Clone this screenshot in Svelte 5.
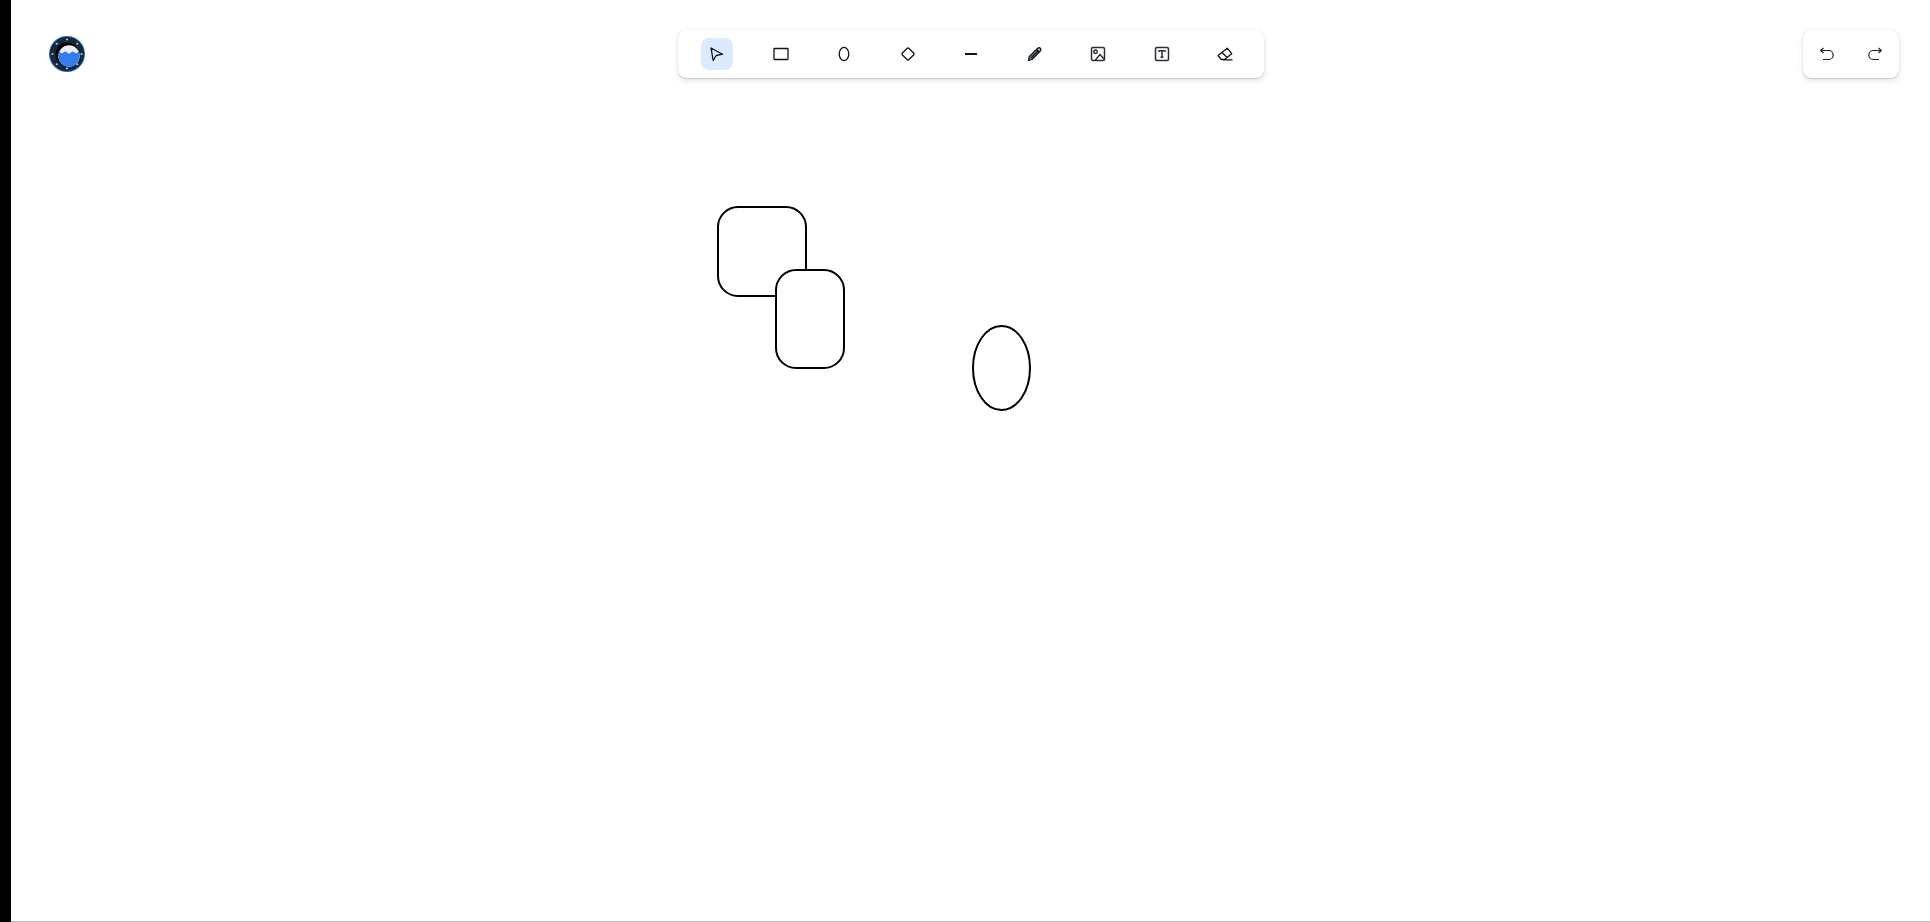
<script lang="ts">
  type Tool = { id: string; label: string };

  const tools: Tool[] = [
    { id: 'select', label: 'Select' },
    { id: 'rectangle', label: 'Rectangle' },
    { id: 'ellipse', label: 'Ellipse' },
    { id: 'diamond', label: 'Diamond' },
    { id: 'line', label: 'Line' },
    { id: 'pencil', label: 'Pencil' },
    { id: 'image', label: 'Image' },
    { id: 'text', label: 'Text' },
    { id: 'eraser', label: 'Eraser' },
  ];

  let activeTool = $state('select');

  // eight bolts around the porthole rim
  const bolts = Array.from({ length: 8 }, (_, i) => {
    const angle = (i * Math.PI) / 4;
    return { x: 18 + 14.5 * Math.cos(angle), y: 18 + 14.5 * Math.sin(angle) };
  });
</script>

<div class="app">
  <div class="edge"></div>

  <main class="board">
    <svg class="canvas" aria-label="Drawing canvas">
      <rect x="707" y="207" width="88" height="89" rx="20" />
      <rect x="765" y="270" width="68" height="98" rx="20" />
      <ellipse cx="990.5" cy="368" rx="28.5" ry="42" />
    </svg>

    <header>
      <a class="logo" href="/" aria-label="Home">
        <svg width="36" height="36" viewBox="0 0 36 36">
          <circle cx="18" cy="18" r="18" fill="#2166d1" />
          <circle cx="18" cy="18" r="17" fill="#15293a" />
          <circle cx="18" cy="18" r="11.5" fill="#000" />
          <circle cx="20" cy="20" r="10.7" fill="#eee" />
          <path
            d="M10.3 15.5q2 3 4.2 1q1.700-2 3.500 0q2 2 4 0q1.700-2 3.500 0q2.200 2 4.200-1A10.700 10.700 0 1 1 10.300 15.500z"
            fill="#337df0"
          />
          {#each bolts as bolt}
            <circle cx={bolt.x} cy={bolt.y} r="1.1" fill="#c4c2b4" />
          {/each}
        </svg>
      </a>

      <div class="panel tools" role="toolbar" aria-label="Tools">
        {#each tools as tool (tool.id)}
          <button
            class:active={activeTool === tool.id}
            aria-label={tool.label}
            aria-pressed={activeTool === tool.id}
            onclick={() => (activeTool = tool.id)}
          >
            <svg class={tool.id} width="16" height="16" viewBox="0 0 16 16">
              {#if tool.id === 'select'}
                <path d="M2 2L13.5 8.2L7.2 9.5L4.2 14.5z" />
              {:else if tool.id === 'rectangle'}
                <rect x="1" y="2.5" width="14" height="11" rx="0.5" />
              {:else if tool.id === 'ellipse'}
                <ellipse cx="8" cy="8" rx="4.8" ry="6.6" />
              {:else if tool.id === 'diamond'}
                <rect x="3.4" y="3.4" width="9.2" height="9.2" rx="1" transform="rotate(45 8 8)" />
              {:else if tool.id === 'line'}
                <path d="M2 8h12" />
              {:else if tool.id === 'pencil'}
                <path d="M1.5 14.5L2.2 10.8L10.8 2.2Q12 1 13.3 2.3Q14.600 3.600 13.500 4.900L5 13.500z" fill="#7d8da8" />
                <path d="M9.500 3.500L12.300 6.300M4 12L11.500 4.500" />
                <circle cx="12.2" cy="3.600" r="0.700" fill="#fff" stroke="none" />
              {:else if tool.id === 'image'}
                <rect x="1.5" y="1.5" width="13" height="13" rx="1.5" />
                <circle cx="5.500" cy="5.700" r="1.700" />
                <path d="M5 14.500L10 8.500L14.500 13.500" />
              {:else if tool.id === 'text'}
                <rect x="1.5" y="1.5" width="13" height="13" rx="1.5" />
                <path d="M5 6V4.7h6V6M8 4.700v6.600M6.500 11.300h3" />
              {:else}
                <path d="M1 9.500L10.300 2.200L14.700 7.700L7.500 13.500H4.300zM5 6.500L10 11.500M6 13.800h9.500" />
              {/if}
            </svg>
          </button>
        {/each}
      </div>

      <div class="panel history">
        <button aria-label="Undo">
          <svg width="16" height="16" viewBox="0 0 16 16">
            <path d="M4.500 2L1.700 4.500L4.500 7M1.700 4.500h8a4.500 4.500 0 0 1 0 9H4" />
          </svg>
        </button>
        <button aria-label="Redo">
          <svg width="16" height="16" viewBox="0 0 16 16">
            <path d="M11.500 2L14.300 4.500L11.500 7M14.300 4.500h-8a4.500 4.500 0 0 0 0 9H12" />
          </svg>
        </button>
      </div>
    </header>
  </main>
</div>

<style>
  :global(body) {
    margin: 0;
    font-family: 'Liberation Sans', Arial, sans-serif;
  }

  .app {
    display: flex;
    box-sizing: border-box;
    height: 100vh;
    border-bottom: 1px solid #b9b8c4;
    background: #fff;
  }

  .edge {
    width: 11px;
    /* runs over the bottom border */
    margin-bottom: -1px;
    background: #000;
  }

  .board {
    position: relative;
    flex: 1;
    min-width: 0;
  }

  .canvas {
    position: absolute;
    inset: 0;
    width: 100%;
    height: 100%;
  }

  .canvas > * {
    fill: #fff;
    stroke: #000;
    stroke-width: 2px;
  }

  header {
    position: relative;
    display: grid;
    grid-template-columns: 1fr auto 1fr;
    align-items: center;
    padding: 30px 31px 0 32px;
  }

  .logo {
    display: flex;
    justify-self: start;
    padding: 6px;
  }

  .panel {
    display: flex;
    justify-content: space-between;
    box-sizing: border-box;
    padding: 8px;
    border-radius: 8px;
    background: #fff;
    box-shadow:
      0 0 1px rgba(0, 0, 0, 0.2),
      0 1px 1px rgba(0, 0, 0, 0.12),
      0 3px 6px rgba(0, 0, 0, 0.1);
  }

  .tools {
    width: 586px;
    padding: 8px 23px;
  }

  .history {
    justify-self: end;
    gap: 16px;
  }

  button {
    display: flex;
    align-items: center;
    justify-content: center;
    width: 32px;
    height: 32px;
    padding: 0;
    border: none;
    border-radius: 8px;
    background: none;
    cursor: pointer;
  }

  button.active {
    background: #dbeafe;
  }

  button svg {
    fill: none;
    stroke: #111318;
    stroke-width: 1.3px;
    stroke-linejoin: round;
  }

  button svg.line {
    stroke-width: 2px;
  }

  button svg.image,
  button svg.text {
    stroke: #2c2e35;
    stroke-width: 1.5px;
  }

  .history svg {
    stroke: #22242a;
    stroke-width: 1.2px;
  }
</style>
